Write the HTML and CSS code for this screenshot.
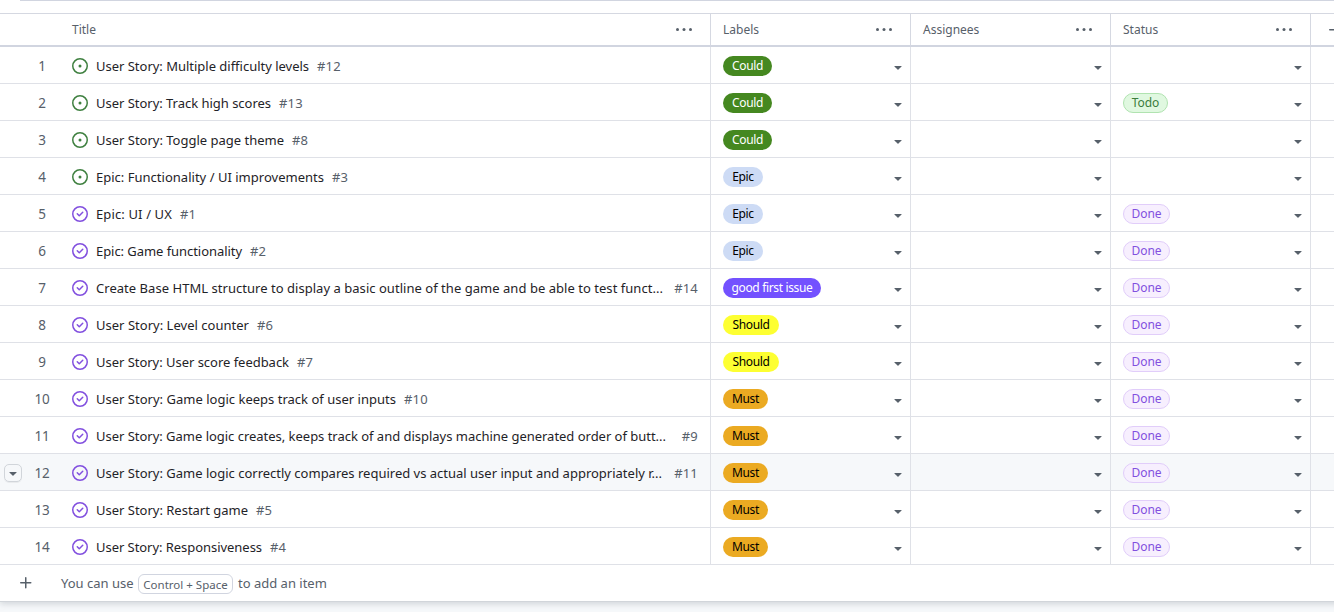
FILE: index.html
```
<!DOCTYPE html>
<html lang="en">
<head>
<meta charset="utf-8">
<title>Project table</title>
<link rel="stylesheet" href="styles.css">
</head>
<body>
<svg class="sprite" aria-hidden="true">
  <symbol id="open" viewBox="0 0 16 16"><path d="M8 9.5a1.5 1.5 0 1 0 0-3 1.5 1.5 0 0 0 0 3Z"/><path d="M8 0a8 8 0 1 1 0 16A8 8 0 0 1 8 0ZM1.5 8a6.5 6.5 0 1 0 13 0 6.5 6.5 0 0 0-13 0Z"/></symbol>
  <symbol id="closed" viewBox="0 0 16 16"><path d="M11.28 6.78a.75.75 0 0 0-1.06-1.06L7.25 8.69 5.78 7.22a.75.75 0 0 0-1.06 1.06l2 2a.75.75 0 0 0 1.06 0l3.5-3.5Z"/><path d="M16 8A8 8 0 1 1 0 8a8 8 0 0 1 16 0Zm-1.5 0a6.5 6.5 0 1 0-13 0 6.5 6.5 0 0 0 13 0Z"/></symbol>
  <symbol id="caret" viewBox="0 0 16 16"><path d="m4.427 7.427 3.396 3.396a.25.25 0 0 0 .354 0l3.396-3.396A.25.25 0 0 0 11.396 7H4.604a.25.25 0 0 0-.177.427Z"/></symbol>
  <symbol id="dots" viewBox="0 0 18 4"><circle cx="1.5" cy="1.5" r="1.5"/><circle cx="8" cy="1.5" r="1.5"/><circle cx="14.5" cy="1.5" r="1.5"/></symbol>
  <symbol id="plus" viewBox="0 0 16 16"><path d="M7.75 2a.75.75 0 0 1 .75.75V7h4.25a.75.75 0 0 1 0 1.5H8.5v4.25a.75.75 0 0 1-1.5 0V8.5H2.75a.75.75 0 0 1 0-1.5H7V2.75A.75.75 0 0 1 7.75 2Z"/></symbol>
</svg>
<div class="panel">
  <div class="toolbar"></div>
  <div class="table" id="table">
    <div class="row head">
      <div class="cell title"><span>Title</span><svg class="dots"><use href="#dots"/></svg></div>
      <div class="cell"><span>Labels</span><svg class="dots"><use href="#dots"/></svg></div>
      <div class="cell"><span>Assignees</span><svg class="dots"><use href="#dots"/></svg></div>
      <div class="cell"><span>Status</span><svg class="dots"><use href="#dots"/></svg></div>
      <div class="cell add"><svg class="icon"><use href="#plus"/></svg></div>
    </div>
  </div>
  <div class="footer"><svg class="icon"><use href="#plus"/></svg><span class="hint">You can use</span><kbd>Control + Space</kbd><span class="hint after">to add an item</span></div>
</div>
<script src="table.js"></script>
</body>
</html>
```
FILE: styles.css
```
* { box-sizing: border-box; }
body { margin: 0; height: 612px; overflow: hidden; background: #f6f8fa; font-family: "Noto Sans", sans-serif; font-size: 13px; color: #1f2328; }
.sprite { position: absolute; width: 0; height: 0; }
.panel { height: 601px; width: 1354px; background: #fff; box-shadow: 0 1px 0 #d1d5da, 0 3px 6px rgba(140,149,159,.35); }
.toolbar { height: 13px; margin-left: 20px; border-top: 1px solid #d1d5e0; }
.row { display: grid; grid-template-columns: 711px 200px 200px 200px 43px; height: 37px; }
.cell { display: flex; align-items: center; min-width: 0; padding: 2px 4px 0 12px; border-right: 1px solid #dfe1e7; border-bottom: 1px solid #dfe1e7; }
.head { height: 34px; color: #57606a; font-size: 12px; }
.head .cell { border-top: 1px solid #d5d8e1; border-right-color: #d5d8e1; border-bottom: 2px solid #d1d5e0; padding-top: 0; padding-right: 16px; justify-content: space-between; }
.head .add { padding: 0 0 0 16px; justify-content: flex-start; }
.dots { width: 18px; height: 4px; fill: #57606a; }
.row .title { padding-left: 0; padding-right: 12px; }
.row.head .title { padding-left: 72px; padding-right: 16px; }
.selected { background: #f6f8fa; }
.menu { width: 18px; height: 18px; margin: 0 2px 0 4px; border-radius: 5px; flex: none; }
.selected .menu { display: flex; align-items: center; justify-content: center; border: 1px solid #d1d5da; box-shadow: 0 1px 0 rgba(31,35,40,.06); }
.num { width: 36px; margin-right: 12px; text-align: center; font-size: 13.5px; letter-spacing: -.3px; color: #57606a; flex: none; }
.icon { width: 16px; height: 16px; fill: #57606a; flex: none; }
.state { margin-right: 8px; }
.state.open { fill: #3f8040; }
.state.closed { fill: #8250df; }
.name { white-space: nowrap; flex: none; }
.ref { margin-left: 8px; color: #57606a; letter-spacing: .2px; flex: none; }
.push .ref { margin-left: auto; }
.pill { display: flex; align-items: center; justify-content: center; height: 20px; padding-bottom: 1px; border-radius: 10px; font-size: 12px; letter-spacing: -.35px; white-space: nowrap; }
.caret { margin-left: auto; position: relative; top: 1px; }
.could { width: 49px; background: #458820; color: #fff; }
.epic { width: 40px; background: #cddbf5; color: #000; }
.gfi { width: 98px; background: #7351ff; color: #fff; }
.should { width: 56px; background: #fdff32; color: #000; }
.must { width: 45px; background: #ebaa22; color: #000; }
.todo { width: 45px; background: #e0f8e0; color: #3b7d3c; border: 1px solid #b0e3b0; letter-spacing: 0; }
.done { width: 47px; background: #f7effe; color: #8250df; border: 1px solid #e1cdfa; letter-spacing: 0; }
.footer { display: flex; align-items: center; height: 36px; padding-left: 18px; color: #57606a; }
.hint { width: 73px; margin-left: 27px; white-space: nowrap; }
.hint.after { margin-left: 5px; }
kbd { display: flex; align-items: center; justify-content: center; width: 95px; height: 20px; margin: 2px 0 0 4px; border: 1px solid #d1d5e0; border-radius: 6px; font-family: inherit; font-size: 11.5px; white-space: nowrap; }
```
FILE: table.js
```
// title, reference, rendered title width, state, label, status
const items = [
  ["User Story: Multiple difficulty levels", "#12", 213, "open", "could", ""],
  ["User Story: Track high scores", "#13", 175, "open", "could", "todo"],
  ["User Story: Toggle page theme", "#8", 188, "open", "could", ""],
  ["Epic: Functionality / UI improvements", "#3", 228, "open", "epic", ""],
  ["Epic: UI / UX", "#1", 76, "closed", "epic", "done"],
  ["Epic: Game functionality", "#2", 146, "closed", "epic", "done"],
  ["Create Base HTML structure to display a basic outline of the game and be able to test funct...", "#14", 567, "closed", "gfi", "done"],
  ["User Story: Level counter", "#6", 153, "closed", "should", "done"],
  ["User Story: User score feedback", "#7", 193, "closed", "should", "done"],
  ["User Story: Game logic keeps track of user inputs", "#10", 300, "closed", "must", "done"],
  ["User Story: Game logic creates, keeps track of and displays machine generated order of butt...", "#9", 570, "closed", "must", "done"],
  ["User Story: Game logic correctly compares required vs actual user input and appropriately r...", "#11", 566, "closed", "must", "done"],
  ["User Story: Restart game", "#5", 152, "closed", "must", "done"],
  ["User Story: Responsiveness", "#4", 166, "closed", "must", "done"],
];
const names = { could: "Could", epic: "Epic", gfi: "good first issue", should: "Should", must: "Must", todo: "Todo", done: "Done" };
const caret = '<svg class="icon caret"><use href="#caret"/></svg>';
const pill = k => k ? `<span class="pill ${k}"><span>${names[k]}</span></span>` : "";
const table = document.getElementById("table");
items.forEach(([name, ref, width, state, label, status], i) => {
  const row = document.createElement("div");
  row.className = "row" + (i === 11 ? " selected" : "") + (width > 500 ? " push" : "");
  row.innerHTML = `<div class="cell title"><span class="menu">${i === 11 ? '<svg class="icon"><use href="#caret"/></svg>' : ""}</span>
    <span class="num">${i + 1}</span><svg class="icon state ${state}"><use href="#${state}"/></svg>
    <span class="name">${name}</span><span class="ref">${ref}</span></div>
    <div class="cell">${pill(label)}${caret}</div><div class="cell">${caret}</div>
    <div class="cell">${pill(status)}${caret}</div><div class="cell"></div>`;
  table.append(row);
  const el = row.querySelector(".name");
  const track = (width - el.getBoundingClientRect().width) / name.length;
  el.style.letterSpacing = track + "px";
});
```
